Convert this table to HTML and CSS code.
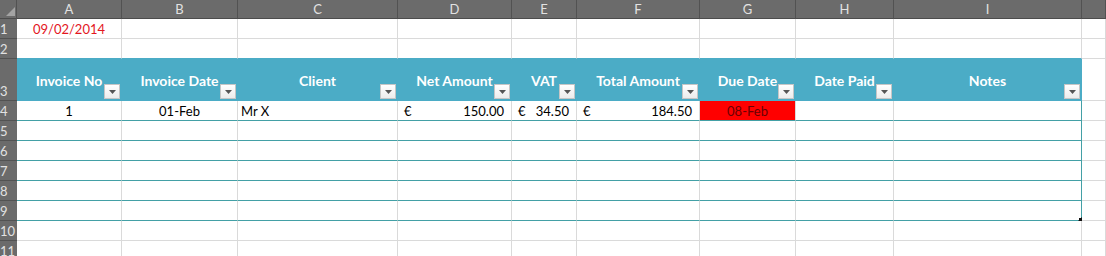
FILE: index.html
```html
<!DOCTYPE html>
<html lang="en">
<head>
<meta charset="utf-8">
<title>Invoices</title>
<link rel="stylesheet" href="styles.css">
</head>
<body>
<div class="sheet">
  <div class="row hdr">
    <div class="corner"><svg width="9" height="9" viewBox="0 0 9 9"><polygon points="9,0 9,9 0,9" fill="#a3a3a3"/></svg></div>
    <div class="ch">A</div><div class="ch">B</div><div class="ch">C</div><div class="ch">D</div><div class="ch">E</div><div class="ch">F</div><div class="ch">G</div><div class="ch">H</div><div class="ch">I</div><div class="ch"></div>
  </div>

  <div class="row r20">
    <div class="rn">1</div>
    <div class="c ctr red">09/02/2014</div><div class="c"></div><div class="c"></div><div class="c"></div><div class="c"></div><div class="c"></div><div class="c"></div><div class="c"></div><div class="c"></div><div class="c"></div>
  </div>

  <div class="row r20">
    <div class="rn">2</div>
    <div class="c above"></div><div class="c above"></div><div class="c above"></div><div class="c above"></div><div class="c above"></div><div class="c above"></div><div class="c above"></div><div class="c above"></div><div class="c above"></div><div class="c"></div>
  </div>

  <div class="row r42">
    <div class="rn">3</div>
    <div class="c th">Invoice No<span class="fb"><svg width="7" height="4" viewBox="0 0 7 4"><polygon points="0,0 7,0 3.5,4" fill="#555"/></svg></span></div>
    <div class="c th">Invoice Date<span class="fb"><svg width="7" height="4" viewBox="0 0 7 4"><polygon points="0,0 7,0 3.5,4" fill="#555"/></svg></span></div>
    <div class="c th">Client<span class="fb"><svg width="7" height="4" viewBox="0 0 7 4"><polygon points="0,0 7,0 3.5,4" fill="#555"/></svg></span></div>
    <div class="c th">Net Amount<span class="fb"><svg width="7" height="4" viewBox="0 0 7 4"><polygon points="0,0 7,0 3.5,4" fill="#555"/></svg></span></div>
    <div class="c th">VAT<span class="fb"><svg width="7" height="4" viewBox="0 0 7 4"><polygon points="0,0 7,0 3.5,4" fill="#555"/></svg></span></div>
    <div class="c th">Total Amount<span class="fb"><svg width="7" height="4" viewBox="0 0 7 4"><polygon points="0,0 7,0 3.5,4" fill="#555"/></svg></span></div>
    <div class="c th">Due Date<span class="fb"><svg width="7" height="4" viewBox="0 0 7 4"><polygon points="0,0 7,0 3.5,4" fill="#555"/></svg></span></div>
    <div class="c th">Date Paid<span class="fb"><svg width="7" height="4" viewBox="0 0 7 4"><polygon points="0,0 7,0 3.5,4" fill="#555"/></svg></span></div>
    <div class="c th">Notes<span class="fb"><svg width="7" height="4" viewBox="0 0 7 4"><polygon points="0,0 7,0 3.5,4" fill="#555"/></svg></span></div>
    <div class="c"></div>
  </div>

  <div class="row r20">
    <div class="rn">4</div>
    <div class="c tb ctr">1</div>
    <div class="c tb ctr">01-Feb</div>
    <div class="c tb">Mr X</div>
    <div class="c tb acct"><span>€</span><span>150.00</span></div>
    <div class="c tb acct"><span>€</span><span>34.50</span></div>
    <div class="c tb acct"><span>€</span><span>184.50</span></div>
    <div class="c tb ctr due">08-Feb</div>
    <div class="c tb"></div>
    <div class="c tb last"></div>
    <div class="c"></div>
  </div>

  <div class="row r20">
    <div class="rn">5</div>
    <div class="c tb"></div><div class="c tb"></div><div class="c tb"></div><div class="c tb"></div><div class="c tb"></div><div class="c tb"></div><div class="c tb"></div><div class="c tb"></div><div class="c tb last"></div><div class="c"></div>
  </div>
  <div class="row r20">
    <div class="rn">6</div>
    <div class="c tb"></div><div class="c tb"></div><div class="c tb"></div><div class="c tb"></div><div class="c tb"></div><div class="c tb"></div><div class="c tb"></div><div class="c tb"></div><div class="c tb last"></div><div class="c"></div>
  </div>
  <div class="row r20">
    <div class="rn">7</div>
    <div class="c tb"></div><div class="c tb"></div><div class="c tb"></div><div class="c tb"></div><div class="c tb"></div><div class="c tb"></div><div class="c tb"></div><div class="c tb"></div><div class="c tb last"></div><div class="c"></div>
  </div>
  <div class="row r20">
    <div class="rn">8</div>
    <div class="c tb"></div><div class="c tb"></div><div class="c tb"></div><div class="c tb"></div><div class="c tb"></div><div class="c tb"></div><div class="c tb"></div><div class="c tb"></div><div class="c tb last"></div><div class="c"></div>
  </div>
  <div class="row r20">
    <div class="rn">9</div>
    <div class="c tb"></div><div class="c tb"></div><div class="c tb"></div><div class="c tb"></div><div class="c tb"></div><div class="c tb"></div><div class="c tb"></div><div class="c tb"></div><div class="c tb last"><span class="grip"><svg width="4" height="4" viewBox="0 0 4 4"><polygon points="4,0 4,4 0,4" fill="#111"/><rect x="1" y="1" width="3" height="3" fill="#111"/></svg></span></div><div class="c"></div>
  </div>

  <div class="row r20">
    <div class="rn">10</div>
    <div class="c"></div><div class="c"></div><div class="c"></div><div class="c"></div><div class="c"></div><div class="c"></div><div class="c"></div><div class="c"></div><div class="c"></div><div class="c"></div>
  </div>
  <div class="row r20">
    <div class="rn">11</div>
    <div class="c"></div><div class="c"></div><div class="c"></div><div class="c"></div><div class="c"></div><div class="c"></div><div class="c"></div><div class="c"></div><div class="c"></div><div class="c"></div>
  </div>
</div>
</body>
</html>
```

FILE: styles.css
```css
* {
  box-sizing: border-box;
  margin: 0;
  padding: 0;
}

body {
  margin: 0;
  background: #ffffff;
  overflow: hidden;
  font-family: Lato, "Liberation Sans", sans-serif;
  font-size: 13px;
  color: #000000;
}

.sheet {
  width: 1106px;
  height: 256px;
  overflow: hidden;
}

.row {
  display: grid;
  grid-template-columns: 17px 105px 116px 160px 114px 65px 123px 96px 98px 188px 1fr;
}

.hdr { height: 19px; }
.r20 { height: 20px; }
.r42 { height: 42px; }

.corner,
.ch {
  background: #6b6b6b;
  border-right: 1px solid #525252;
  border-bottom: 1px solid #4c4c4c;
}

.corner {
  display: flex;
  align-items: flex-end;
  justify-content: flex-end;
  padding: 0 1px 2px 0;
}

.corner svg { display: block; }

.ch {
  color: #e2e2e2;
  font-size: 13px;
  display: flex;
  align-items: center;
  justify-content: center;
}

.rn {
  background: #6b6b6b;
  color: #e2e2e2;
  font-size: 13px;
  line-height: 16px;
  border-bottom: 1px solid #525252;
  display: flex;
  align-items: flex-end;
  padding: 0 0 1px 0;
}

.c {
  position: relative;
  display: flex;
  align-items: flex-end;
  padding: 0 3px 1px;
  line-height: 16px;
  white-space: nowrap;
  overflow: hidden;
  border-right: 1px solid #dadada;
  border-bottom: 1px solid #dadada;
}

.ctr { justify-content: center; }

.red { color: #e3161e; }

.above { border-bottom-color: #4bacc6; }

.th {
  background: #4bacc6;
  border-right-color: #4bacc6;
  border-bottom-color: #4bacc6;
  color: #ffffff;
  font-weight: 700;
  font-size: 14px;
  line-height: 17px;
  justify-content: center;
  align-items: center;
  padding: 2px 0 0;
  overflow: visible;
}

.fb {
  position: absolute;
  right: 1px;
  bottom: 1px;
  width: 16px;
  height: 15px;
  background: linear-gradient(#ffffff, #ececec);
  border: 1px solid #c6c6c6;
  display: flex;
  align-items: center;
  justify-content: center;
}

.fb svg { display: block; }

.tb { border-bottom-color: #43a0a6; }
.tb.last { border-right-color: #43a0a6; overflow: visible; }

.acct {
  justify-content: space-between;
  padding: 0 7px 1px 6px;
}

.due {
  background: #ff0000;
  color: #6a0004;
}

.grip {
  position: absolute;
  right: -1px;
  bottom: -1px;
  width: 4px;
  height: 4px;
}

.grip svg { display: block; }
```
